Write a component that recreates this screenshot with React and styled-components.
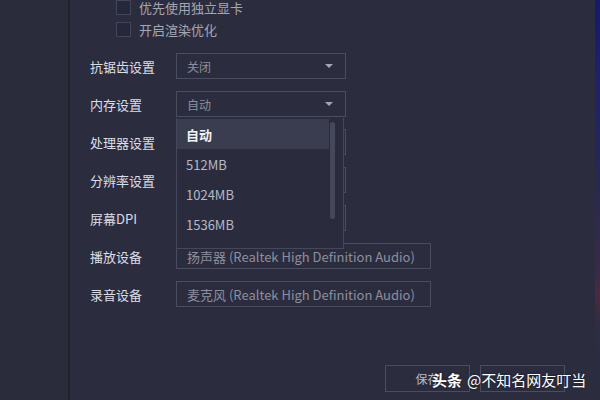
import React from 'react';
import styled, { createGlobalStyle } from 'styled-components';

const GlobalStyle = createGlobalStyle`
  html, body {
    margin: 0;
    padding: 0;
    background: #2b2d3e;
  }
  body {
    font-family: "Noto Sans CJK SC", "Noto Sans", sans-serif;
  }
`;

const Page = styled.div`
  display: flex;
  width: 600px;
  height: 400px;
  overflow: hidden;
  background: #2b2d3e;
  position: relative;
`;

const Sidebar = styled.div`
  width: 68px;
  flex-shrink: 0;
  background: #2a2c3c;
  border-right: 2px solid #21232e;
`;

const Main = styled.div`
  flex: 1;
  display: flex;
  flex-direction: column;
  padding: 0 0 8px 20px;
`;

const EdgeStrip = styled.div`
  width: 5px;
  flex-shrink: 0;
  background: linear-gradient(
    180deg,
    #141a6e 0%,
    #1d226a 20%,
    #26294f 45%,
    #3a2a48 68%,
    #4a2a3e 74%,
    #2c2d45 82%,
    #2a2c3e 100%
  );
`;

const CheckGroup = styled.div`
  display: flex;
  flex-direction: column;
  gap: 7px;
  padding-left: 26px;
`;

const CheckRow = styled.label`
  display: flex;
  align-items: center;
  gap: 8px;
  height: 15px;
  line-height: 15px;
  font-size: 13px;
  color: #a4a6b5;
`;

const Box = styled.span`
  width: 13px;
  height: 13px;
  border: 1px solid #43455a;
  background: #25273a;
`;

const Form = styled.div`
  display: flex;
  flex-direction: column;
  gap: 12px;
  margin-top: 16px;
`;

const Row = styled.div`
  display: grid;
  grid-template-columns: 86px auto;
  align-items: center;
  height: 26px;
`;

const Label = styled.span`
  font-size: 13px;
  color: #dcdde6;
`;

const SelectWrap = styled.div`
  position: relative;
`;

const Select = styled.div`
  box-sizing: border-box;
  display: flex;
  align-items: center;
  justify-content: space-between;
  width: ${p => p.$w}px;
  height: 26px;
  padding: 0 12px 0 10px;
  border: 1px solid #4a4c5f;
  font-size: ${p => p.$fs || 12}px;
  color: #8d8f9e;
  white-space: nowrap;
  overflow: hidden;
`;

const Arrow = styled.span`
  width: 0;
  height: 0;
  border-left: 4px solid transparent;
  border-right: 4px solid transparent;
  border-top: 4px solid #a3a5b3;
  flex-shrink: 0;
`;

const Menu = styled.div`
  position: absolute;
  top: 27px;
  left: 0;
  z-index: 2;
  box-sizing: border-box;
  width: 168px;
  height: 131px;
  padding-top: 1px;
  background: #2a2c3d;
  border: 1px solid #45475b;
  border-top: none;
`;

const Item = styled.div`
  display: flex;
  align-items: center;
  width: 152px;
  height: 30px;
  padding-left: 9px;
  box-sizing: border-box;
  font-size: 13px;
  color: ${p => (p.$active ? '#f1f2f6' : '#b6b8c6')};
  font-weight: ${p => (p.$active ? 700 : 400)};
  background: ${p => (p.$active ? '#3a3c4f' : 'transparent')};
`;

const Scroll = styled.div`
  position: absolute;
  top: 4px;
  right: 8px;
  width: 5px;
  height: 97px;
  border-radius: 3px;
  background: #46485a;
`;

const Buttons = styled.div`
  display: flex;
  justify-content: flex-end;
  gap: 10px;
  margin-top: auto;
  padding-right: 30px;
`;

const Button = styled.div`
  box-sizing: border-box;
  display: flex;
  align-items: center;
  justify-content: center;
  width: 85px;
  height: 27px;
  border: 1px solid #4a4c5f;
  font-size: 12px;
  color: #b8bac6;
`;

const Watermark = styled.div`
  position: absolute;
  left: 432px;
  top: 369px;
  font-size: 15px;
  color: #ffffff;
  white-space: nowrap;
  text-shadow: 0 0 2px rgba(0, 0, 0, 0.6);
  b {
    font-weight: 700;
    margin-right: 5px;
  }
`;

const memory = ['自动', '512MB', '1024MB', '1536MB'];

export default function App() {
  return (
    <>
      <GlobalStyle />
      <Page>
        <Sidebar />
        <Main>
          <CheckGroup>
            <CheckRow><Box />优先使用独立显卡</CheckRow>
            <CheckRow><Box />开启渲染优化</CheckRow>
          </CheckGroup>
          <Form>
            <Row>
              <Label>抗锯齿设置</Label>
              <Select $w={170}>关闭<Arrow /></Select>
            </Row>
            <Row>
              <Label>内存设置</Label>
              <SelectWrap>
                <Select $w={170}>自动<Arrow /></Select>
                <Menu>
                  {memory.map((m, i) => (
                    <Item key={m} $active={i === 0}>{m}</Item>
                  ))}
                  <Scroll />
                </Menu>
              </SelectWrap>
            </Row>
            <Row>
              <Label>处理器设置</Label>
              <Select $w={170} />
            </Row>
            <Row>
              <Label>分辨率设置</Label>
              <Select $w={170} />
            </Row>
            <Row>
              <Label>屏幕DPI</Label>
              <Select $w={170} />
            </Row>
            <Row>
              <Label>播放设备</Label>
              <Select $w={255} $fs={13}>扬声器 (Realtek High Definition Audio)</Select>
            </Row>
            <Row>
              <Label>录音设备</Label>
              <Select $w={255} $fs={13}>麦克风 (Realtek High Definition Audio)</Select>
            </Row>
          </Form>
          <Buttons>
            <Button>保存</Button>
            <Button />
          </Buttons>
        </Main>
        <EdgeStrip />
        <Watermark><b>头条</b>@不知名网友叮当</Watermark>
      </Page>
    </>
  );
}
